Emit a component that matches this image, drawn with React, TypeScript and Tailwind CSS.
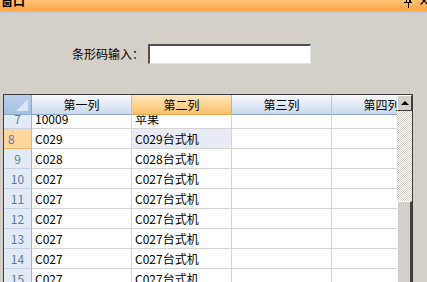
import React from 'react'

const font = { fontFamily: '"Noto Sans CJK SC", "Liberation Sans", sans-serif' }

const rows = [
  { n: 7, a: '10009', b: '苹果' },
  { n: 8, a: 'C029', b: 'C029台式机' },
  { n: 9, a: 'C028', b: 'C028台式机' },
  { n: 10, a: 'C027', b: 'C027台式机' },
  { n: 11, a: 'C027', b: 'C027台式机' },
  { n: 12, a: 'C027', b: 'C027台式机' },
  { n: 13, a: 'C027', b: 'C027台式机' },
  { n: 14, a: 'C027', b: 'C027台式机' },
  { n: 15, a: 'C027', b: 'C027台式机' },
]

function HeaderCell({ label, active, width }: { label: string; active?: boolean; width: string }) {
  return (
    <div
      className={`${width} shrink-0 h-5 flex items-center justify-center text-[12px] text-black border-r border-b overflow-hidden whitespace-nowrap ${
        active
          ? 'bg-gradient-to-b from-[#fee8bd] to-[#f8c068] border-r-[#e0b070] border-b-[#e6a84e]'
          : 'bg-gradient-to-b from-[#f6f9fc] to-[#cbdaee] border-r-[#b4c6dc] border-b-[#8ea8c8]'
      }`}
    >
      {label}
    </div>
  )
}

export default function App() {
  return (
    <div className="w-[427px] h-[282px] overflow-hidden bg-[#d4d0c8] flex flex-col" style={font}>
      {/* title bar, top half scrolled off */}
      <div className="-mt-[9px] h-5 shrink-0 flex items-center justify-between px-[1px] bg-gradient-to-b from-[#ffe0a0] via-[#ffc070] to-[#ffa444]">
        <span className="text-[12px] font-bold leading-none text-black">窗口</span>
        <div className="flex items-center gap-[6px] text-[12px] font-bold leading-none text-black">
          {/* pin */}
          <svg width="8" height="12" viewBox="0 0 8 12" className="mt-[2px]">
            <path d="M1 1h6M2 1v5M5 1v5M6 1v5M0 6h8M4 6v6" stroke="#000" strokeWidth="1" fill="none" shapeRendering="crispEdges" />
          </svg>
          <span className="-mr-[4px]">×</span>
        </div>
      </div>
      <div className="h-[2px] shrink-0 bg-[#b9c6d4]" />

      {/* barcode input */}
      <div className="flex items-center mt-[31px] pl-[72px] gap-[4px] shrink-0">
        <span className="text-[12px] text-black leading-none">条形码输入：</span>
        <div className="w-[163px] h-5 bg-white border-t-2 border-l-2 border-t-[#505050] border-l-[#505050] border-b border-r border-b-[#e8e6e0] border-r-[#e8e6e0]" />
      </div>

      {/* grid */}
      <div className="mt-[30px] ml-[3px] w-[410px] flex-1 flex border-t border-l border-r border-[#3c3c3c] bg-white overflow-hidden">
        <div className="flex-1 flex flex-col overflow-hidden">
          <div className="flex shrink-0">
            <div className="relative w-[28px] shrink-0 h-5 bg-gradient-to-b from-[#b9d0ec] to-[#a3c0e4] border-r border-b border-[#8ea8c8] overflow-hidden">
              <div className="absolute right-[3px] bottom-[3px] w-0 h-0 border-l-[12px] border-l-transparent border-b-[12px] border-b-[#dbe6f4]" />
            </div>
            <HeaderCell label="第一列" width="w-[100px]" />
            <HeaderCell label="第二列" width="w-[100px]" active />
            <HeaderCell label="第三列" width="w-[100px]" />
            <HeaderCell label="第四列" width="w-[100px]" />
          </div>
          <div className="flex-1 overflow-hidden">
            <div className="-mt-[6px]">
              {rows.map((r) => {
                const cur = r.n === 8
                return (
                  <div key={r.n} className="flex h-5 text-[12px] leading-none">
                    <div
                      className={`w-[28px] shrink-0 flex items-center border-r border-b text-[#5a7ca6] ${
                        cur
                          ? 'bg-[#ffd69c] border-r-[#e8b46c] border-b-[#e8b46c] pl-[4px]'
                          : 'bg-[#e2eaf6] border-r-[#9cb4d0] border-b-[#c4d2e4] justify-center'
                      }`}
                    >
                      {r.n}
                    </div>
                    <div className="w-[100px] shrink-0 flex items-center pl-[3px] border-r border-b border-[#d4d4d4] text-black">
                      {r.a}
                    </div>
                    <div
                      className={`w-[100px] shrink-0 flex items-center pl-[3px] border-r border-b border-[#d4d4d4] text-black ${
                        cur ? 'bg-[#e8eaf6]' : ''
                      }`}
                    >
                      {r.b}
                    </div>
                    <div className="w-[100px] shrink-0 border-r border-b border-[#d4d4d4]" />
                    <div className="w-[100px] shrink-0 border-r border-b border-[#d4d4d4]" />
                  </div>
                )
              })}
            </div>
          </div>
        </div>

        {/* vertical scrollbar */}
        <div className="w-[15px] shrink-0 flex flex-col">
          <div className="h-4 shrink-0 bg-[#d4d0c8] border-t border-l border-white border-r border-b border-r-[#404040] border-b-[#404040] flex items-center justify-center">
            <div className="w-0 h-0 border-l-[4px] border-r-[4px] border-b-[4px] border-l-transparent border-r-transparent border-b-black" />
          </div>
          <div className="h-[90px] shrink-0 bg-[repeating-conic-gradient(#ffffff_0%_25%,#d4d0c8_0%_50%)] bg-[length:2px_2px]" />
          <div className="flex-1 bg-[#d4d0c8] border-t border-l border-white border-r-2 border-r-[#404040]" />
        </div>
      </div>
    </div>
  )
}
